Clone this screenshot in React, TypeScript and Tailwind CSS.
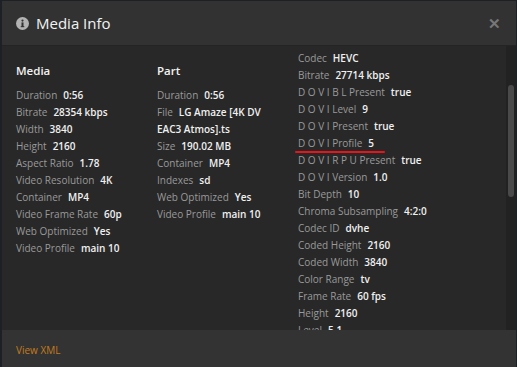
import React from "react";

type Row = [string, string];

const media: Row[] = [
  ["Duration", "0:56"],
  ["Bitrate", "28354 kbps"],
  ["Width", "3840"],
  ["Height", "2160"],
  ["Aspect Ratio", "1.78"],
  ["Video Resolution", "4K"],
  ["Container", "MP4"],
  ["Video Frame Rate", "60p"],
  ["Web Optimized", "Yes"],
  ["Video Profile", "main 10"],
];

const part: Row[] = [
  ["Duration", "0:56"],
  ["File", "LG Amaze [4K DV"],
  ["", "EAC3 Atmos].ts"],
  ["Size", "190.02 MB"],
  ["Container", "MP4"],
  ["Indexes", "sd"],
  ["Web Optimized", "Yes"],
  ["Video Profile", "main 10"],
];

const stream: Row[] = [
  ["Codec", "HEVC"],
  ["Bitrate", "27714 kbps"],
  ["D O V I B L Present", "true"],
  ["D O V I Level", "9"],
  ["D O V I Present", "true"],
  ["D O V I Profile", "5"],
  ["D O V I R P U Present", "true"],
  ["D O V I Version", "1.0"],
  ["Bit Depth", "10"],
  ["Chroma Subsampling", "4:2:0"],
  ["Codec ID", "dvhe"],
  ["Coded Height", "2160"],
  ["Coded Width", "3840"],
  ["Color Range", "tv"],
  ["Frame Rate", "60 fps"],
  ["Height", "2160"],
  ["Level", "5.1"],
];

function InfoRow({ row, mark }: { row: Row; mark?: boolean }) {
  const [label, value] = row;
  return (
    <div className="relative flex h-[17px] items-center gap-[6px] whitespace-nowrap text-[10px] leading-[17px]">
      {label && <span className="text-[#9a9a9a]">{label}</span>}
      <span className="font-semibold text-[#f0f0f0]">{value}</span>
      {mark && (
        <span className="absolute bottom-[-1px] left-[-3px] h-[2px] w-[90px] rounded-full bg-[#e8141a]" />
      )}
    </div>
  );
}

function Column({ title, rows }: { title: string; rows: Row[] }) {
  return (
    <div className="w-[141px] shrink-0 pt-[17px]">
      <div className="mb-[8px] h-[16px] text-[11.5px] font-semibold leading-[16px] text-[#f2f2f2]">
        {title}
      </div>
      {rows.map((r, i) => (
        <InfoRow key={i} row={r} />
      ))}
    </div>
  );
}

export default function App() {
  return (
    <div
      className="h-[367px] w-[517px] overflow-hidden bg-[#1d2025] pl-[2px] pt-[1px]"
      style={{ fontFamily: '"Open Sans", "Noto Sans", sans-serif' }}
    >
      <div className="flex h-[380px] w-[514px] flex-col bg-[#282828]">
        <div className="flex h-[45px] shrink-0 items-center border-b border-[#242424] bg-[#323232] pl-[14px] pr-[15px]">
          <svg width="13" height="13" viewBox="0 0 13 13" className="mr-[7px]">
            <circle cx="6.5" cy="6.5" r="6.5" fill="#b3b3b3" />
            <circle cx="6.5" cy="3.6" r="1.1" fill="#333" />
            <rect x="5.5" y="5.4" width="2" height="4.6" fill="#333" />
            <rect x="4.7" y="9.2" width="3.6" height="1" fill="#333" />
          </svg>
          <span className="text-[15px] leading-none text-[#f2f2f2]">Media Info</span>
          <span className="ml-auto text-[15px] font-bold leading-none text-[#777]">✕</span>
        </div>

        <div className="flex h-[284px] shrink-0">
          <div className="flex flex-1 pl-[14px]">
            <Column title="Media" rows={media} />
            <Column title="Part" rows={part} />
            <div className="flex-1 pt-[3.5px]">
              {stream.map((r, i) => (
                <InfoRow key={i} row={r} mark={r[0] === "D O V I Profile"} />
              ))}
            </div>
          </div>
          <div className="w-[10px] shrink-0 bg-[#222] pt-[39px]">
            <div className="ml-[2px] h-[112px] w-[6px] rounded-full bg-[#4a4a4a]" />
          </div>
        </div>

        <div className="relative z-10 flex h-[40px] shrink-0 items-center bg-[#333] pl-[14px]">
          <span className="text-[10px] text-[#c47b1d]">View XML</span>
        </div>
      </div>
    </div>
  );
}
